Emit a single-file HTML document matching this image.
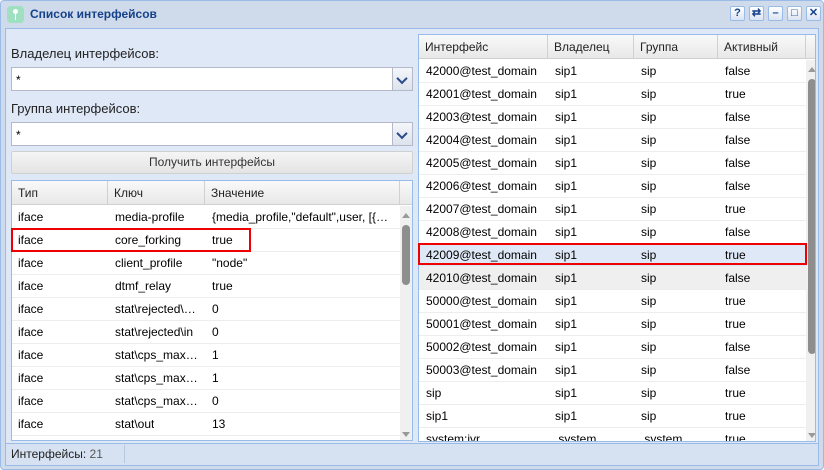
<!DOCTYPE html>
<html><head><meta charset="utf-8"><style>
*{box-sizing:border-box;margin:0;padding:0}
body{width:824px;height:470px;background:#fff;font-family:"Liberation Sans",Arial,sans-serif;font-size:12px;color:#000;position:relative;overflow:hidden}
.a{position:absolute}
.win{left:0;top:0;width:824px;height:470px;background:#cfdbeb;border:1px solid #99bbe8;border-radius:4px}
.title{left:30px;top:7px;font-weight:bold;color:#15428b;font-size:12px}
.body{left:5px;top:28px;width:814px;height:438px;background:#dfe8f6;border:1px solid #99bbe8}
.lbl{font-size:13px;color:#222}
.combo{background:#fff;border:1px solid #b5b8c8;height:24px}
.combo span{position:absolute;left:4px;top:5px}
.trig{position:absolute;right:0;top:0;width:20px;height:22px;background:linear-gradient(#f4f6fa,#dde3ec);border-left:1px solid #b5b8c8}
.trig:after{content:"";position:absolute;left:5px;top:8px;width:6px;height:6px;border-right:2px solid #2a4a8a;border-bottom:2px solid #2a4a8a;transform:rotate(45deg) translate(-1px,-1px)}
.btn{background:linear-gradient(#f5f5f5,#e4e4e4);border:1px solid #d0d0d0;border-radius:2px;text-align:center;color:#333;font-size:12px;line-height:21px}
.grid{background:#fff;border:1px solid #99bbe8;overflow:hidden}
.hd{position:absolute;left:0;top:0;height:24px;background:linear-gradient(#f9f9f9,#e8e8e8);border-bottom:1px solid #d0d0d0}
.hd div,.r div{position:absolute;top:0;white-space:nowrap;overflow:hidden}
.hd div{height:24px;line-height:24px;padding-left:6px;border-right:1px solid #d0d0d0;color:#222}
.r{position:absolute;left:0;height:23px;border-bottom:1px solid #ededed}
.r div{line-height:22px;padding-left:6px}
.sb{position:absolute;background:#f0f0f0}
.th{position:absolute;background:#8e8e8e;border-radius:4px}
.tb{position:absolute;top:6px;width:15px;height:15px;border:1px solid #99bbe8;border-radius:2px;background:linear-gradient(#fff,#dbe4f2);color:#15428b;font-size:11px;font-weight:bold;text-align:center;line-height:13px}
</style></head><body>
<div class="a win"></div>
<div class="a" style="left:7px;top:6px;width:17px;height:17px;border-radius:4px;background:#9fe0c0"></div>
<div class="a" style="left:13px;top:9px;width:5px;height:5px;border-radius:50%;background:#fff"></div>
<div class="a" style="left:15px;top:14px;width:1px;height:6px;background:#fff"></div>
<div class="a title">Список интерфейсов</div>
<div class="a tb" style="left:730px">?</div>
<div class="a tb" style="left:749px">⇄</div>
<div class="a tb" style="left:768px">–</div>
<div class="a tb" style="left:787px">□</div>
<div class="a tb" style="left:806px">✕</div>
<div class="a body"></div>

<div class="a lbl" style="left:11px;top:46px">Владелец интерфейсов:</div>
<div class="a combo" style="left:11px;top:67px;width:402px"><span>*</span><div class="trig"></div></div>
<div class="a lbl" style="left:11px;top:101px">Группа интерфейсов:</div>
<div class="a combo" style="left:11px;top:122px;width:402px"><span>*</span><div class="trig"></div></div>
<div class="a btn" style="left:11px;top:151px;width:402px;height:23px">Получить интерфейсы</div>

<div class="a grid" style="left:11px;top:180px;width:402px;height:261px">
<div class="hd" style="width:400px"><div style="left:0;width:96px">Тип</div><div style="left:96px;width:97px">Ключ</div><div style="left:193px;width:195px">Значение</div></div>
<div class="r" style="top:25px;width:388px"><div style="left:0">iface</div><div style="left:97px">media-profile</div><div style="left:194px;width:190px">{media_profile,"default",user, [{…</div></div>
<div class="r" style="top:48px;width:388px"><div style="left:0">iface</div><div style="left:97px">core_forking</div><div style="left:194px">true</div></div>
<div class="r" style="top:71px;width:388px"><div style="left:0">iface</div><div style="left:97px">client_profile</div><div style="left:194px">"node"</div></div>
<div class="r" style="top:94px;width:388px"><div style="left:0">iface</div><div style="left:97px">dtmf_relay</div><div style="left:194px">true</div></div>
<div class="r" style="top:117px;width:388px"><div style="left:0">iface</div><div style="left:97px">stat\rejected\…</div><div style="left:194px">0</div></div>
<div class="r" style="top:140px;width:388px"><div style="left:0">iface</div><div style="left:97px">stat\rejected\in</div><div style="left:194px">0</div></div>
<div class="r" style="top:163px;width:388px"><div style="left:0">iface</div><div style="left:97px">stat\cps_max…</div><div style="left:194px">1</div></div>
<div class="r" style="top:186px;width:388px"><div style="left:0">iface</div><div style="left:97px">stat\cps_max…</div><div style="left:194px">1</div></div>
<div class="r" style="top:209px;width:388px"><div style="left:0">iface</div><div style="left:97px">stat\cps_max…</div><div style="left:194px">0</div></div>
<div class="r" style="top:232px;width:388px"><div style="left:0">iface</div><div style="left:97px">stat\out</div><div style="left:194px">13</div></div>
<div class="sb" style="left:388px;top:25px;width:12px;height:235px"></div>
<div class="th" style="left:390px;top:44px;width:8px;height:60px"></div>
<div class="a" style="left:390px;top:32px;border:4px solid transparent;border-bottom:5px solid #999;border-top:0"></div>
<div class="a" style="left:390px;top:251px;border:4px solid transparent;border-top:5px solid #999;border-bottom:0"></div>
</div>
<div class="a" style="left:11px;top:228px;width:240px;height:24px;border:2px solid #e00"></div>

<div class="a grid" style="left:418px;top:34px;width:398px;height:408px">
<div class="hd" style="width:396px"><div style="left:0;width:129px">Интерфейс</div><div style="left:129px;width:86px">Владелец</div><div style="left:215px;width:84px">Группа</div><div style="left:299px;width:88px">Активный</div></div>
<div class="r" style="top:25px;width:387px"><div style="left:1px">42000@test_domain</div><div style="left:130px">sip1</div><div style="left:216px">sip</div><div style="left:300px">false</div></div>
<div class="r" style="top:48px;width:387px"><div style="left:1px">42001@test_domain</div><div style="left:130px">sip1</div><div style="left:216px">sip</div><div style="left:300px">true</div></div>
<div class="r" style="top:71px;width:387px"><div style="left:1px">42003@test_domain</div><div style="left:130px">sip1</div><div style="left:216px">sip</div><div style="left:300px">false</div></div>
<div class="r" style="top:94px;width:387px"><div style="left:1px">42004@test_domain</div><div style="left:130px">sip1</div><div style="left:216px">sip</div><div style="left:300px">false</div></div>
<div class="r" style="top:117px;width:387px"><div style="left:1px">42005@test_domain</div><div style="left:130px">sip1</div><div style="left:216px">sip</div><div style="left:300px">false</div></div>
<div class="r" style="top:140px;width:387px"><div style="left:1px">42006@test_domain</div><div style="left:130px">sip1</div><div style="left:216px">sip</div><div style="left:300px">false</div></div>
<div class="r" style="top:163px;width:387px"><div style="left:1px">42007@test_domain</div><div style="left:130px">sip1</div><div style="left:216px">sip</div><div style="left:300px">true</div></div>
<div class="r" style="top:186px;width:387px"><div style="left:1px">42008@test_domain</div><div style="left:130px">sip1</div><div style="left:216px">sip</div><div style="left:300px">false</div></div>
<div class="r" style="top:209px;width:387px;background:#dfe8f6"><div style="left:1px">42009@test_domain</div><div style="left:130px">sip1</div><div style="left:216px">sip</div><div style="left:300px">true</div></div>
<div class="r" style="top:232px;width:387px;background:#efefef"><div style="left:1px">42010@test_domain</div><div style="left:130px">sip1</div><div style="left:216px">sip</div><div style="left:300px">false</div></div>
<div class="r" style="top:255px;width:387px"><div style="left:1px">50000@test_domain</div><div style="left:130px">sip1</div><div style="left:216px">sip</div><div style="left:300px">true</div></div>
<div class="r" style="top:278px;width:387px"><div style="left:1px">50001@test_domain</div><div style="left:130px">sip1</div><div style="left:216px">sip</div><div style="left:300px">true</div></div>
<div class="r" style="top:301px;width:387px"><div style="left:1px">50002@test_domain</div><div style="left:130px">sip1</div><div style="left:216px">sip</div><div style="left:300px">false</div></div>
<div class="r" style="top:324px;width:387px"><div style="left:1px">50003@test_domain</div><div style="left:130px">sip1</div><div style="left:216px">sip</div><div style="left:300px">false</div></div>
<div class="r" style="top:347px;width:387px"><div style="left:1px">sip</div><div style="left:130px">sip1</div><div style="left:216px">sip</div><div style="left:300px">true</div></div>
<div class="r" style="top:370px;width:387px"><div style="left:1px">sip1</div><div style="left:130px">sip1</div><div style="left:216px">sip</div><div style="left:300px">true</div></div>
<div class="r" style="top:393px;width:387px"><div style="left:1px">system:ivr</div><div style="left:130px">.system</div><div style="left:216px">.system</div><div style="left:300px">true</div></div>
<div class="sb" style="left:387px;top:25px;width:11px;height:382px"></div>
<div class="th" style="left:389px;top:44px;width:8px;height:275px"></div>
<div class="a" style="left:389px;top:32px;border:4px solid transparent;border-bottom:5px solid #999;border-top:0"></div>
<div class="a" style="left:389px;top:398px;border:4px solid transparent;border-top:5px solid #999;border-bottom:0"></div>
</div>
<div class="a" style="left:418px;top:243px;width:389px;height:22px;border:2px solid #e00"></div>

<div class="a" style="left:6px;top:443px;width:812px;height:22px;background:#d6e2f2;border-top:1px solid #99bbe8"></div>
<div class="a" style="left:11px;top:447px;color:#222">Интерфейсы: <span style="color:#555">21</span></div>
<div class="a" style="left:124px;top:445px;width:1px;height:18px;background:#b8c8de"></div>
</body></html>
